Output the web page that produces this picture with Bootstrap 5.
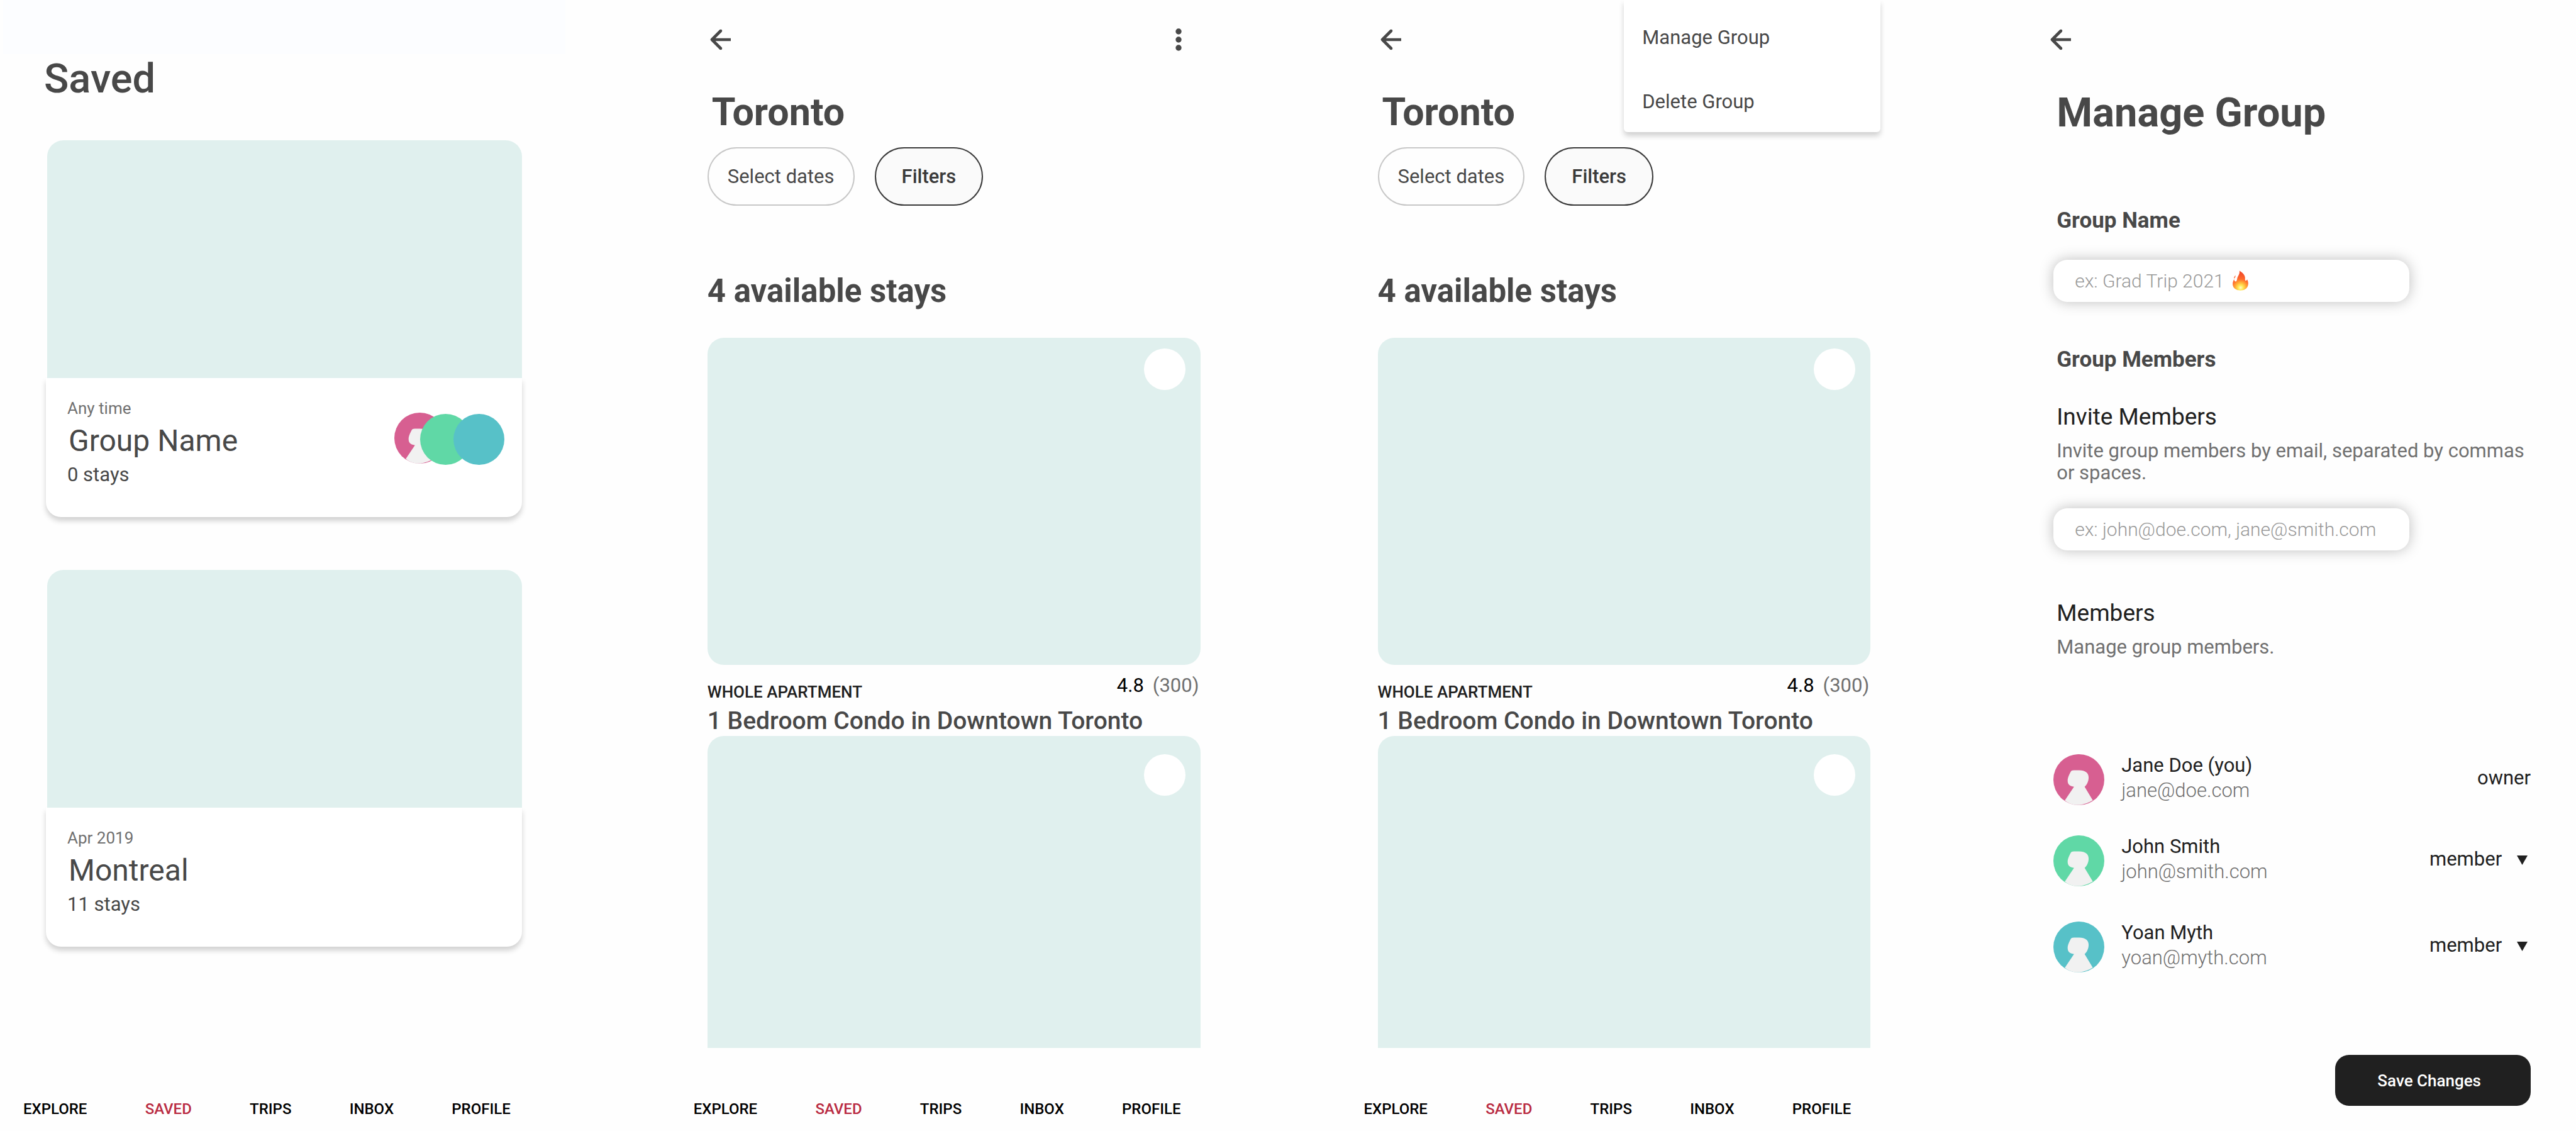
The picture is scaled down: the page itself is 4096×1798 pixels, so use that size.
<!DOCTYPE html>
<html lang="en">
<head>
<meta charset="utf-8">
<meta name="viewport" content="width=device-width, initial-scale=1">
<title>Saved groups</title>
<link href="https://cdn.jsdelivr.net/npm/bootstrap@5.3.0/dist/css/bootstrap.min.css" rel="stylesheet">
<style>
:root { --ink: #484848; --dark: #202020; --grey: #707070; --mint: #e0f0ee; --red: #b92b42; }
body { font-family: Roboto, "Liberation Sans", sans-serif; color: var(--ink); background: #fefefe; }
button { font-family: inherit; }
.board { gap: 167px; }
.screen { flex: 1 1 0; min-width: 0; }

/* type scale */
.t24 { font-size: 24px; line-height: 28px; }
.t26 { font-size: 26px; line-height: 30px; }
.t30 { font-size: 30px; line-height: 36px; }
.t31 { font-size: 31px; line-height: 36px; }
.t35 { font-size: 35px; line-height: 42px; }
.t37 { font-size: 37px; line-height: 44px; }
.t39 { font-size: 39px; line-height: 46px; }
.t48 { font-size: 48px; line-height: 56px; }
.t51 { font-size: 51px; line-height: 60px; }
.t61 { font-size: 61px; line-height: 60px; }
.t65 { font-size: 65px; line-height: 66px; }
.w5 { font-weight: 500; }
.w3 { font-weight: 300; }
.c-ink { color: var(--ink); }
.c-dark { color: var(--dark); }
.c-grey { color: var(--grey); }

.raised { box-shadow: 0 6px 8px rgba(0,0,0,.18); }

/* bottom navigation */
.tabs { padding: 0 87px 21px 37px; }
.tabs a { color: #000; text-decoration: none; font-weight: 500; }
.tabs a.current { color: var(--red); }

/* saved list */
.status-band { height: 86px; margin: 0 0 0 5px; background: #fcfdff; }
.saved-main { padding: 6px 69px 0 73px; }
.saved-main h1 { margin: 0 0 65px -3px; }
.group-list { gap: 84px; }
.group-photo { position: relative; height: 378px; margin-left: 2px; border-radius: 26px 26px 0 0; background: var(--mint); }
.group-info { padding: 33px 28px 49px 34px; border-radius: 0 0 24px 24px; background: #fff; }
.group-info h2 { margin: 9px 0 8px 2px; }
.faces { margin-top: 22px; }

/* stays */
.topbar { height: 81px; padding: 45px 85px 0 63px; }
.topbar button { line-height: 0; }
.stays-main { padding: 67px 56px 0 59px; }
.stays-main h1 { margin: 0 0 26px 7px; }
.chips { gap: 32px; }
.chips .btn { height: 93px; border: 2px solid #c8c8c8; border-radius: 47px; color: var(--ink); padding: 0 30px; }
.chips .btn.strong { border-color: #3a3a3a; background: #fafafa; padding: 0 41px; font-weight: 500; color: #3a3a3a; }
.stays-main h2 { margin: 106px 0 44px; }
.stay-photo { height: 520px; border-radius: 26px; background: var(--mint); padding: 17px 24px; }
.stay-photo.cut { height: 496px; border-radius: 26px 26px 0 0; padding-top: 29px; }
.heart { width: 66px; height: 66px; background: #fff; }
.kind { padding-top: 28px; }
.rating { padding: 15px 2px 0 0; gap: 14px; }
.stay-name { margin: 8px 0 1px; }
.group-menu { top: 0; right: 40px; width: 408px; padding: 42px 29px 30px; gap: 66px; background: #fff; border-radius: 0 0 6px 6px; }

/* manage group */
.manage-main { padding: 65px 72px 0 68px; }
.manage-main h1, .manage-main h2, .manage-main h3, .manage-main .label, .manage-main p { margin: 0; padding-left: 5px; }
.manage-main p { line-height: 35px; margin-top: 14px; }
.manage-main .label { margin-top: 118px; }
.manage-main .field { width: 566px; margin-top: 41px; }
.manage-main p + .field { margin-top: 39px; }
.manage-main h2 { margin-top: 71px; }
.manage-main h2 + .label { margin-top: 48px; }
.manage-main .field + h3 { margin-top: 78px; }
.field .form-control { height: 67px; padding: 0 34px; border: 0; border-radius: 22px; background: #fff; font-weight: 300; box-shadow: 0 0 22px rgba(0,0,0,.26); }
.field .form-control::placeholder { color: #999; opacity: 1; }
.flame { left: 285px; top: 17px; pointer-events: none; }
.people { margin: 153px 0 0; }
.person { gap: 27px; height: 81px; margin-bottom: 48px; }
.person + .person { margin-bottom: 56px; }
.person-text { gap: 4px; }
.role { margin-top: 20px; }
.role .form-select { width: 161px; padding: 0; border: 0; background: none; color: var(--dark); }
.role svg { right: 5px; top: 12px; pointer-events: none; }
.save-row { padding: 0 72px 40px 0; }
.save-row .btn { height: 81px; padding: 0 79px 0 67px; border-radius: 22px; background: var(--dark); color: #fff; }
</style>
</head>
<body>
<svg width="0" height="0" class="position-absolute" aria-hidden="true">
  <symbol id="arrow" viewBox="0 0 34 34">
    <path d="M33 17H3M17 3 3 17 17 31" fill="none" stroke="#484848" stroke-width="4.6" stroke-linejoin="round"/>
    <circle cx="17" cy="3" r="2.3" fill="#484848"/><circle cx="17" cy="31" r="2.3" fill="#484848"/>
  </symbol>
  <symbol id="avatar" viewBox="66 71 432 432">
    <circle cx="282" cy="287" r="216" fill="currentColor"/>
    <path fill="#f1f1f1" d="M240 207H285C335 207 365 228 365 268C365 300 350 331 331 347L400 462Q350 493 290 501Q270 504 240 499Q195 490 163 463L241 347C208 342 187 330 187 295C187 268 203 240 211 223C217 210 226 207 240 207Z"/>
  </symbol>
  <symbol id="down" viewBox="0 0 17 15"><path d="M0 0H17L8.500 15Z" fill="#202020"/></symbol>
</svg>

<div class="board d-flex min-vh-100">

  <!-- Saved groups -->
  <section class="screen d-flex flex-column">
    <div class="status-band"></div>
    <main class="saved-main">
      <h1 class="t65 w5">Saved</h1>
      <div class="group-list d-flex flex-column">
        <article>
          <div class="group-photo"></div>
          <div class="group-info raised d-flex justify-content-between align-items-start">
            <div>
              <div class="t26 c-grey">Any time</div>
              <h2 class="t48 fw-normal">Group Name</h2>
              <div class="t31">0 stays</div>
            </div>
            <svg class="faces" width="175" height="83" viewBox="0 0 175 83" role="img" aria-label="Group members">
              <use href="#avatar" width="81" height="81" color="#d75f91"/>
              <circle cx="81.500" cy="42.500" r="40.500" fill="#60d8a6"/>
              <circle cx="134.500" cy="42.500" r="40.500" fill="#57c1c8"/>
            </svg>
          </div>
        </article>
        <article>
          <div class="group-photo"></div>
          <div class="group-info raised">
            <div class="t26 c-grey">Apr 2019</div>
            <h2 class="t48 fw-normal">Montreal</h2>
            <div class="t31">11 stays</div>
          </div>
        </article>
      </div>
    </main>
    <nav class="tabs t24 d-flex justify-content-between mt-auto">
      <a href="#">EXPLORE</a><a href="#" class="current">SAVED</a><a href="#">TRIPS</a><a href="#">INBOX</a><a href="#">PROFILE</a>
    </nav>
  </section>

  <!-- Stays of one group -->
  <section class="screen d-flex flex-column">
    <header class="topbar d-flex justify-content-between align-items-center">
      <button class="btn p-0 border-0" aria-label="Back"><svg width="34" height="34"><use href="#arrow"/></svg></button>
      <button class="btn p-0 border-0" aria-label="More">
        <svg width="12" height="36" viewBox="0 0 12 36" fill="#484848"><circle cx="6" cy="5" r="4.700"/><circle cx="6" cy="18" r="4.700"/><circle cx="6" cy="31" r="4.700"/></svg>
      </button>
    </header>
    <main class="stays-main">
      <h1 class="t61 fw-bold">Toronto</h1>
      <div class="chips d-flex">
        <button class="btn t31">Select dates</button>
        <button class="btn t31 strong">Filters</button>
      </div>
      <h2 class="t51 fw-bold">4 available stays</h2>
      <div class="stay-photo d-flex justify-content-end"><button class="heart btn rounded-circle p-0 border-0" aria-label="Save stay"></button></div>
      <div class="d-flex justify-content-between align-items-start">
        <div class="kind t26 w5 c-dark">WHOLE APARTMENT</div>
        <div class="rating t31 d-flex"><span class="text-black">4.8</span><span class="c-grey">(300)</span></div>
      </div>
      <h3 class="stay-name t39 w5">1 Bedroom Condo in Downtown Toronto</h3>
      <div class="stay-photo cut d-flex justify-content-end"><button class="heart btn rounded-circle p-0 border-0" aria-label="Save stay"></button></div>
    </main>
    <nav class="tabs t24 d-flex justify-content-between mt-auto">
      <a href="#">EXPLORE</a><a href="#" class="current">SAVED</a><a href="#">TRIPS</a><a href="#">INBOX</a><a href="#">PROFILE</a>
    </nav>
  </section>

  <!-- Stays with the group menu open -->
  <section class="screen d-flex flex-column position-relative">
    <header class="topbar d-flex align-items-center">
      <button class="btn p-0 border-0" aria-label="Back"><svg width="34" height="34"><use href="#arrow"/></svg></button>
    </header>
    <div class="group-menu raised position-absolute d-flex flex-column align-items-start" role="menu">
      <button class="btn t31 c-ink p-0 border-0" role="menuitem">Manage Group</button>
      <button class="btn t31 c-ink p-0 border-0" role="menuitem">Delete Group</button>
    </div>
    <main class="stays-main">
      <h1 class="t61 fw-bold">Toronto</h1>
      <div class="chips d-flex">
        <button class="btn t31">Select dates</button>
        <button class="btn t31 strong">Filters</button>
      </div>
      <h2 class="t51 fw-bold">4 available stays</h2>
      <div class="stay-photo d-flex justify-content-end"><button class="heart btn rounded-circle p-0 border-0" aria-label="Save stay"></button></div>
      <div class="d-flex justify-content-between align-items-start">
        <div class="kind t26 w5 c-dark">WHOLE APARTMENT</div>
        <div class="rating t31 d-flex"><span class="text-black">4.8</span><span class="c-grey">(300)</span></div>
      </div>
      <h3 class="stay-name t39 w5">1 Bedroom Condo in Downtown Toronto</h3>
      <div class="stay-photo cut d-flex justify-content-end"><button class="heart btn rounded-circle p-0 border-0" aria-label="Save stay"></button></div>
    </main>
    <nav class="tabs t24 d-flex justify-content-between mt-auto">
      <a href="#">EXPLORE</a><a href="#" class="current">SAVED</a><a href="#">TRIPS</a><a href="#">INBOX</a><a href="#">PROFILE</a>
    </nav>
  </section>

  <!-- Manage group -->
  <section class="screen d-flex flex-column">
    <header class="topbar d-flex align-items-center">
      <button class="btn p-0 border-0" aria-label="Back"><svg width="34" height="34"><use href="#arrow"/></svg></button>
    </header>
    <main class="manage-main">
      <h1 class="t65 fw-bold">Manage Group</h1>
      <label class="label t35 fw-bold d-block" for="group-name">Group Name</label>
      <div class="field position-relative">
        <input class="form-control t30" id="group-name" type="text" placeholder="ex: Grad Trip 2021">
        <svg class="flame position-absolute" width="25" height="32" viewBox="0 0 134 168" aria-hidden="true">
          <defs>
            <radialGradient id="fire" gradientUnits="userSpaceOnUse" cx="68" cy="145" r="120">
              <stop offset="0" stop-color="#fffbd0"/><stop offset=".16" stop-color="#ffec5a"/><stop offset=".38" stop-color="#ffae35"/><stop offset=".62" stop-color="#ff6a2c"/><stop offset="1" stop-color="#f4502c"/>
            </radialGradient>
          </defs>
          <path fill="url(#fire)" d="M58 0C82 16 104 34 106 58C107 74 103 84 112 85C120 84 122 76 124 74C132 88 136 110 130 128C122 154 98 168 66 168C34 168 8 154 2 126C-2 104 4 90 12 72C14 86 20 94 28 92C40 86 36 70 42 56C50 38 62 26 58 0Z"/>
          <path fill="#ff7a4a" d="M24 38C27 50 21 62 12 68C8 58 16 48 24 38Z"/>
        </svg>
      </div>
      <h2 class="t35 fw-bold">Group Members</h2>
      <label class="label t37 c-dark d-block" for="invite">Invite Members</label>
      <p class="t31 c-grey">Invite group members by email, separated by commas or spaces.</p>
      <div class="field">
        <input class="form-control t30" id="invite" type="text" placeholder="ex: john@doe.com, jane@smith.com">
      </div>
      <h3 class="t37 fw-normal c-dark">Members</h3>
      <p class="t31 c-grey">Manage group members.</p>
      <ul class="people list-unstyled t31">
        <li class="person d-flex">
          <svg width="81" height="81" color="#d75f91" aria-hidden="true"><use href="#avatar"/></svg>
          <div class="person-text d-flex flex-column flex-grow-1"><span class="c-dark">Jane Doe (you)</span><span class="c-grey w3">jane@doe.com</span></div>
          <div class="role c-dark">owner</div>
        </li>
        <li class="person d-flex">
          <svg width="81" height="81" color="#60d8a6" aria-hidden="true"><use href="#avatar"/></svg>
          <div class="person-text d-flex flex-column flex-grow-1"><span class="c-dark">John Smith</span><span class="c-grey w3">john@smith.com</span></div>
          <div class="role position-relative"><select class="form-select t31" aria-label="Role of John Smith"><option>member</option><option>owner</option></select><svg class="position-absolute" width="17" height="15"><use href="#down"/></svg></div>
        </li>
        <li class="person d-flex">
          <svg width="81" height="81" color="#57c1c8" aria-hidden="true"><use href="#avatar"/></svg>
          <div class="person-text d-flex flex-column flex-grow-1"><span class="c-dark">Yoan Myth</span><span class="c-grey w3">yoan@myth.com</span></div>
          <div class="role position-relative"><select class="form-select t31" aria-label="Role of Yoan Myth"><option>member</option><option>owner</option></select><svg class="position-absolute" width="17" height="15"><use href="#down"/></svg></div>
        </li>
      </ul>
    </main>
    <div class="save-row d-flex justify-content-end mt-auto">
      <button class="btn t26 w5 border-0">Save Changes</button>
    </div>
  </section>
</div>
<script src="https://cdn.jsdelivr.net/npm/bootstrap@5.3.0/dist/js/bootstrap.bundle.min.js"></script>
</body>
</html>
